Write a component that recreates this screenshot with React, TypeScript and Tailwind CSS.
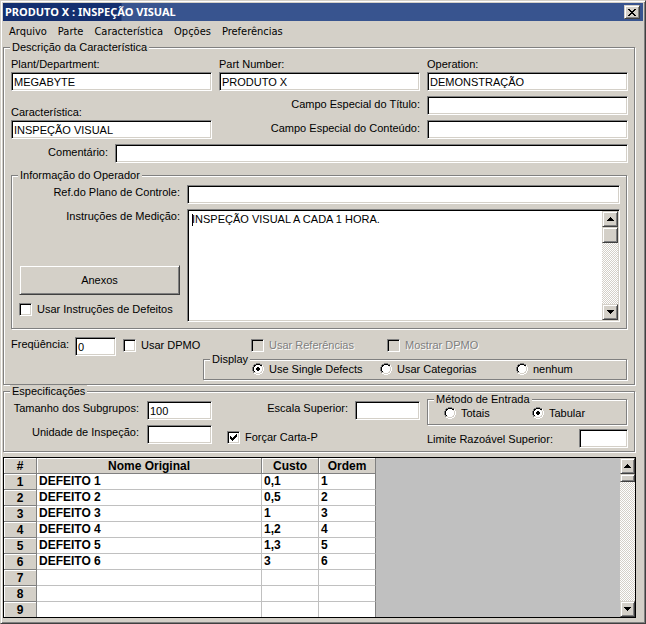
import React, { useId } from 'react';
import clsx from 'clsx';

const SUNKEN =
    'border border-t-[#808080] border-l-[#808080] border-b-white border-r-white shadow-[inset_1px_1px_0_#000,inset_-1px_-1px_0_#d4d0c8] bg-white';
const RAISED =
    'border border-t-[#d4d0c8] border-l-[#d4d0c8] border-b-[#404040] border-r-[#404040] shadow-[inset_1px_1px_0_#fff,inset_-1px_-1px_0_#808080] bg-[#d4d0c8]';
const TRACK = 'bg-[repeating-conic-gradient(#fff_0_25%,#d4d0c8_0_50%)] bg-[length:2px_2px]';
const HEAD_CELL =
    'h-4 border-r border-b border-[#808080] bg-[#d4d0c8] p-0 pt-px text-center leading-[14px] shadow-[inset_1px_1px_0_#fff] group-last:h-[15px] group-last:border-b-0';
const CELL = 'border-r border-b border-b-[#c0c0c0] p-0 pl-[2px] group-last:border-b-0';

const menus = ['Arquivo', 'Parte', 'Característica', 'Opções', 'Preferências'];

const defects = [
    { name: 'DEFEITO 1', cost: '0,1', order: '1' },
    { name: 'DEFEITO 2', cost: '0,5', order: '2' },
    { name: 'DEFEITO 3', cost: '1', order: '3' },
    { name: 'DEFEITO 4', cost: '1,2', order: '4' },
    { name: 'DEFEITO 5', cost: '1,3', order: '5' },
    { name: 'DEFEITO 6', cost: '3', order: '6' },
    { name: '', cost: '', order: '' },
    { name: '', cost: '', order: '' },
    { name: '', cost: '', order: '' },
];

interface GroupProps {
    title: string;
    className?: string;
    bodyClass?: string;
    children: React.ReactNode;
}

const Group: React.FC<GroupProps> = ({ title, className, bodyClass, children }) => (
    <fieldset className={clsx('min-w-0 border border-[#808080] shadow-[1px_1px_0_#fff,inset_1px_1px_0_#fff]', className)}>
        <legend className="ml-[6px] h-3 bg-[#d4d0c8] px-[2px] leading-3">{title}</legend>
        <div className={bodyClass}>{children}</div>
    </fieldset>
);

interface TextFieldProps {
    id: string;
    value?: string;
    className?: string;
}

const TextField: React.FC<TextFieldProps> = ({ id, value = '', className }) => (
    <input id={id} type="text" defaultValue={value} className={clsx(SUNKEN, 'h-[19px] min-w-0 px-[2px] outline-none', className)} />
);

interface CheckProps {
    label: string;
    checked?: boolean;
    disabled?: boolean;
    className?: string;
}

const Check: React.FC<CheckProps> = ({ label, checked, disabled, className }) => {
    const id = useId();
    return (
        <div className={clsx('flex items-start gap-[5px]', className)}>
            <span className="relative size-[13px] shrink-0">
                <input
                    id={id}
                    type="checkbox"
                    defaultChecked={checked}
                    disabled={disabled}
                    className={clsx(SUNKEN, 'peer block size-[13px] appearance-none disabled:bg-[#d4d0c8]')}
                />
                <svg viewBox="0 0 13 13" shapeRendering="crispEdges" className="pointer-events-none absolute inset-0 hidden peer-checked:block">
                    <path d="M3 5h1v1h1v1h1v-1h1v-1h1v-1h1v-1h1v3h-1v1h-1v1h-1v1h-1v1h-1v-1h-1v-1h-1z" />
                </svg>
            </span>
            <label htmlFor={id} className={clsx('whitespace-nowrap', disabled && 'text-[#808080] [text-shadow:1px_1px_0_#fff]')}>
                {label}
            </label>
        </div>
    );
};

interface RadioProps {
    name: string;
    label: string;
    checked?: boolean;
    className?: string;
}

const Radio: React.FC<RadioProps> = ({ name, label, checked, className }) => {
    const id = useId();
    return (
        <div className={clsx('flex items-center gap-[5px]', className)}>
            <span className="relative size-3 shrink-0">
                <input id={id} type="radio" name={name} defaultChecked={checked} className="peer absolute inset-0 size-3 appearance-none" />
                <svg viewBox="0 0 12 12" shapeRendering="crispEdges" className="pointer-events-none absolute inset-0">
                    <path fill="#fff" d="M4 2h4v1h1v1h1v4h-1v1h-1v1h-4v-1h-1v-1h-1v-4h1v-1h1z" />
                    <path fill="#808080" d="M4 0h4v1h-4zM2 1h2v1h-2zM8 1h2v1h-2zM1 2h1v2h-1zM0 4h1v4h-1zM1 8h1v2h-1z" />
                    <path fill="#000" d="M4 1h4v1h-4zM2 2h2v1h-2zM8 2h2v1h-2zM2 3h1v1h-1zM1 4h1v4h-1zM2 8h1v1h-1z" />
                    <path fill="#d4d0c8" d="M9 3h1v1h-1zM10 4h1v4h-1zM9 8h1v1h-1zM2 9h2v1h-2zM8 9h2v1h-2zM4 10h4v1h-4z" />
                    <path fill="#fff" d="M10 2h1v2h-1zM11 4h1v4h-1zM10 8h1v2h-1zM8 10h2v1h-2zM4 11h4v1h-4zM2 10h2v1h-2z" />
                </svg>
                <svg viewBox="0 0 12 12" shapeRendering="crispEdges" className="pointer-events-none absolute inset-0 hidden peer-checked:block">
                    <path d="M5 4h2v1h1v2h-1v1h-2v-1h-1v-2h1z" />
                </svg>
            </span>
            <label htmlFor={id} className="whitespace-nowrap">{label}</label>
        </div>
    );
};

interface ScrollBarProps {
    thumb: string;
    className?: string;
}

const ScrollBar: React.FC<ScrollBarProps> = ({ thumb, className }) => (
    <div className={clsx('flex shrink-0 flex-col', TRACK, className)}>
        <button type="button" aria-label="Up" className={clsx(RAISED, 'flex h-4 items-center justify-center')}>
            <svg width="7" height="4" viewBox="0 0 7 4" shapeRendering="crispEdges">
                <path d="M3 0h1v1h1v1h1v1h1v1h-7v-1h1v-1h1v-1h1z" />
            </svg>
        </button>
        <div className={clsx(RAISED, thumb)} />
        <button type="button" aria-label="Down" className={clsx(RAISED, 'mt-auto flex h-4 items-center justify-center')}>
            <svg width="7" height="4" viewBox="0 0 7 4" shapeRendering="crispEdges">
                <path d="M0 0h7v1h-1v1h-1v1h-1v1h-1v-1h-1v-1h-1v-1h-1z" />
            </svg>
        </button>
    </div>
);

const DefectTable = () => (
    <div className="mt-[5px] -mr-px flex border border-black bg-[#c0c0c0]">
        <table className="w-[372px] table-fixed border-separate border-spacing-0 bg-white text-xs leading-[15px] font-bold">
            <colgroup>
                <col className="w-[33px]" />
                <col />
                <col className="w-[57px]" />
                <col className="w-[57px]" />
            </colgroup>
            <thead>
                <tr>
                    {['#', 'Nome Original', 'Custo', 'Ordem'].map((title) => (
                        <th key={title} className={HEAD_CELL}>{title}</th>
                    ))}
                </tr>
            </thead>
            <tbody>
                {defects.map((row, i) => (
                    <tr key={i} className="group">
                        <th className={HEAD_CELL}>{i + 1}</th>
                        <td className={clsx(CELL, 'border-r-[#c0c0c0]')}>{row.name}</td>
                        <td className={clsx(CELL, 'border-r-[#c0c0c0]')}>{row.cost}</td>
                        <td className={clsx(CELL, 'border-r-[#808080]')}>{row.order}</td>
                    </tr>
                ))}
            </tbody>
        </table>
        <ScrollBar className="ml-auto w-[15px]" thumb="h-2" />
    </div>
);

export default function App() {
    return (
        <main className="border border-t-[#d4d0c8] border-r-[#404040] border-b-[#404040] border-l-[#d4d0c8] bg-[#d4d0c8] p-[2px] pb-[5px] font-['Liberation_Sans',Arial,sans-serif] text-[11px] leading-3 text-black shadow-[inset_1px_1px_0_#fff,inset_-1px_-1px_0_#808080]">
            <header className="flex h-[18px] items-center bg-linear-to-r from-[#142f6f] from-[118px] to-[#38548f] to-[119px] pr-[3px] pl-[2px] font-['Noto_Sans',sans-serif]">
                <h1 className="font-bold text-white">PRODUTO X : INSPEÇÃO VISUAL</h1>
                <button type="button" aria-label="Close" className={clsx(RAISED, 'ml-auto flex h-[14px] w-4 items-center justify-center')}>
                    <svg width="8" height="7" viewBox="0 0 8 7" shapeRendering="crispEdges">
                        <path d="M0 0h2v1h1v1h2v-1h1v-1h2v1h-1v1h-1v1h-1v1h1v1h1v1h1v1h-2v-1h-1v-1h-2v1h-1v1h-2v-1h1v-1h1v-1h1v-1h-1v-1h-1v-1h-1z" />
                    </svg>
                </button>
            </header>

            <nav className="flex h-5 items-center gap-[11px] pt-px pl-[6px] font-['DejaVu_Sans_Condensed','DejaVu_Sans',sans-serif]">
                {menus.map((menu) => (
                    <button key={menu} type="button">{menu}</button>
                ))}
            </nav>

            <div className="flex flex-col pr-2">
                <Group title="Descrição da Característica" bodyClass="pr-[6px] pb-1 pl-[7px]">
                    <div className="grid grid-cols-3 gap-x-[7px] gap-y-[5px] pt-[5px]">
                        <div className="flex flex-col gap-[2px]">
                            <label htmlFor="plant">Plant/Department:</label>
                            <TextField id="plant" value="MEGABYTE" />
                        </div>
                        <div className="flex flex-col gap-[2px]">
                            <label htmlFor="part">Part Number:</label>
                            <TextField id="part" value="PRODUTO X" />
                        </div>
                        <div className="flex flex-col gap-[2px]">
                            <label htmlFor="operation">Operation:</label>
                            <TextField id="operation" value="DEMONSTRAÇÃO" />
                        </div>

                        <div className="row-span-2 flex flex-col justify-end gap-[2px]">
                            <label htmlFor="feature">Característica:</label>
                            <TextField id="feature" value="INSPEÇÃO VISUAL" />
                        </div>
                        <label htmlFor="special-title" className="pt-[2px] text-right">Campo Especial do Título:</label>
                        <TextField id="special-title" />
                        <label htmlFor="special-content" className="pt-[2px] text-right">Campo Especial do Conteúdo:</label>
                        <TextField id="special-content" />
                    </div>
                    <div className="mt-[5px] flex gap-[7px]">
                        <label htmlFor="comment" className="w-[97px] pt-[2px] text-right">Comentário:</label>
                        <TextField id="comment" className="flex-1" />
                    </div>

                    <Group title="Informação do Operador" className="mt-[6px] mr-px" bodyClass="flex gap-[7px] pt-1 pr-[6px] pb-[6px] pl-[7px]">
                        <div className="flex w-[161px] shrink-0 flex-col">
                            <label htmlFor="control-plan" className="pt-px text-right">Ref.do Plano de Controle:</label>
                            <label htmlFor="instructions" className="mt-3 text-right">Instruções de Medição:</label>
                            <button type="button" className={clsx(RAISED, 'mt-auto h-[30px]')}>Anexos</button>
                            <Check label="Usar Instruções de Defeitos" className="mt-2 mb-[6px]" />
                        </div>
                        <div className="flex min-w-0 flex-1 flex-col gap-[5px]">
                            <TextField id="control-plan" />
                            <div className={clsx(SUNKEN, 'relative flex h-[113px] p-px')}>
                                <textarea
                                    id="instructions"
                                    defaultValue="INSPEÇÃO VISUAL A CADA 1 HORA."
                                    className="min-w-0 flex-1 resize-none overflow-hidden px-[3px] py-[2px] outline-none"
                                />
                                <span className="absolute top-1 left-1 h-3 w-px bg-black" />
                                <ScrollBar className="w-4" thumb="h-4" />
                            </div>
                        </div>
                    </Group>

                    <div className="mt-2 flex items-start">
                        <label htmlFor="frequency" className="w-16 pt-px">Freqüência:</label>
                        <TextField id="frequency" value="0" className="w-[41px]" />
                        <Check label="Usar DPMO" className="mt-[2px] ml-[7px] w-32" />
                        <Check label="Usar Referências" disabled className="mt-[2px] w-[136px]" />
                        <Check label="Mostrar DPMO" disabled className="mt-[2px]" />
                    </div>
                    <Group title="Display" className="-mt-[3px] mr-px ml-48" bodyClass="-mt-[2px] flex pb-1 pl-12">
                        <Radio name="display" label="Use Single Defects" checked className="w-32" />
                        <Radio name="display" label="Usar Categorias" className="w-[136px]" />
                        <Radio name="display" label="nenhum" />
                    </Group>
                </Group>

                <Group title="Especificações" bodyClass="flex pr-[6px] pb-[3px] pl-[7px]">
                    <div className="grid grid-cols-[128px_65px] content-start gap-x-2 gap-y-[5px] pt-1 text-right">
                        <label htmlFor="subgroup" className="pt-px">Tamanho dos Subgrupos:</label>
                        <TextField id="subgroup" value="100" />
                        <label htmlFor="unit" className="pt-px">Unidade de Inspeção:</label>
                        <TextField id="unit" />
                    </div>
                    <div className="flex flex-1 flex-col justify-between pt-1">
                        <div className="flex justify-end gap-[7px]">
                            <label htmlFor="scale" className="pt-px">Escala Superior:</label>
                            <TextField id="scale" className="w-[65px]" />
                        </div>
                        <Check label="Forçar Carta-P" checked className="mb-1 ml-[15px]" />
                    </div>
                    <div className="-mt-1 ml-[7px] w-[201px]">
                        <Group title="Método de Entrada" className="mr-px" bodyClass="flex pt-[2px] pb-[5px] pl-4">
                            <Radio name="method" label="Totais" className="w-[88px]" />
                            <Radio name="method" label="Tabular" checked />
                        </Group>
                        <div className="mt-1 flex items-center justify-between">
                            <label htmlFor="limit">Limite Razoável Superior:</label>
                            <TextField id="limit" className="w-[49px]" />
                        </div>
                    </div>
                </Group>

                <DefectTable />
            </div>
        </main>
    );
}
